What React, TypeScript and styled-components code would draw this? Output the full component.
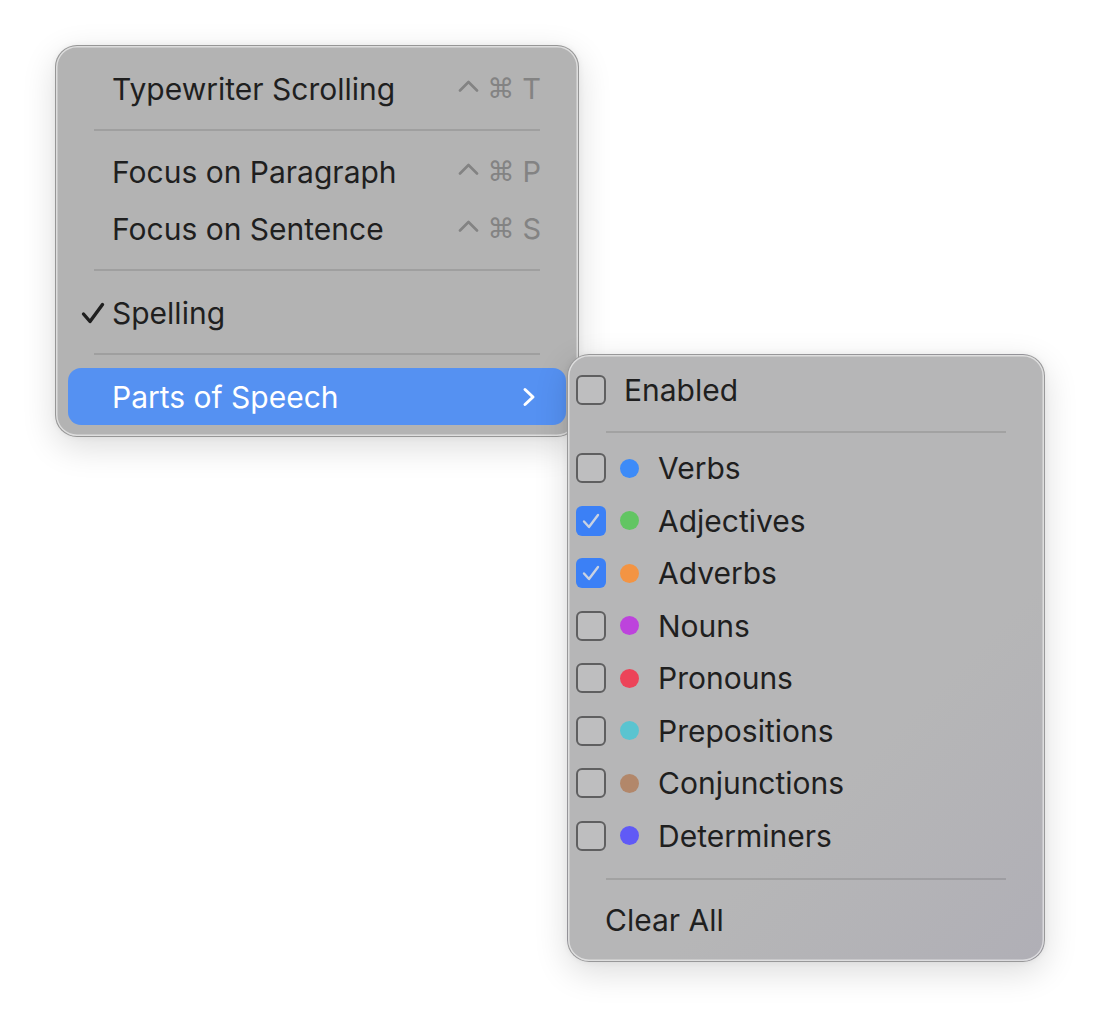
import React from 'react';
import styled, { createGlobalStyle } from 'styled-components';

const GlobalStyle = createGlobalStyle`
  html, body {
    margin: 0;
    padding: 0;
    background: #ffffff;
  }
  body {
    font-family: Inter, "Noto Sans", "Liberation Sans", sans-serif;
    -webkit-font-smoothing: antialiased;
  }
`;

const Desktop = styled.div`
  position: relative;
  width: 1100px;
  height: 1026px;
  overflow: hidden;
`;

const Panel = styled.div<{ $left: number; $top: number; $width: number }>`
  position: absolute;
  left: ${p => p.$left}px;
  top: ${p => p.$top}px;
  width: ${p => p.$width}px;
  box-sizing: border-box;
  border-radius: 22px;
  border: 1px solid rgba(0, 0, 0, 0.16);
  box-shadow: inset 0 0 0 1.5px rgba(255, 255, 255, 0.55), 0 10px 34px rgba(0, 0, 0, 0.14),
    0 0 6px rgba(0, 0, 0, 0.06);
  display: flex;
  flex-direction: column;
`;

const MainPanel = styled(Panel)`
  background: #b3b3b3;
  padding: 14px 0 11px;
`;

const SubPanel = styled(Panel)`
  background: linear-gradient(135deg, #b6b6b7 65%, #b0afb6 100%);
  padding: 9px 0 14px;
`;

const MenuItem = styled.div<{ $active?: boolean }>`
  height: 57px;
  margin: 0 12px;
  padding: 0 25px 0 44px;
  display: flex;
  align-items: center;
  border-radius: 13px;
  position: relative;
  font-size: 30px;
  color: ${p => (p.$active ? '#ffffff' : '#1f1f1f')};
  background: ${p => (p.$active ? '#5591f2' : 'transparent')};
`;

const Label = styled.span`
  flex: 1;
`;

const Tick = styled.svg`
  position: absolute;
  left: 13px;
  top: 18px;
`;

const Shortcut = styled.span`
  display: flex;
  gap: 8px;
  align-items: center;
  color: #838383;
  font-size: 29px;
`;

const Caret = styled.svg`
  margin-top: -6px;
`;

const Glyph = styled.span`
  font-family: "DejaVu Sans", Inter, sans-serif;
  font-size: 27px;
`;

const Separator = styled.div<{ $h: number; $line: number }>`
  height: ${p => p.$h}px;
  margin: 0 38px;
  position: relative;
  &::after {
    content: '';
    position: absolute;
    left: 0;
    right: 0;
    top: ${p => p.$line}px;
    height: 2px;
    background: rgba(0, 0, 0, 0.11);
  }
`;

const SubRow = styled.div<{ $h?: number }>`
  height: ${p => p.$h ?? 52.5}px;
  padding-left: 8px;
  display: flex;
  align-items: center;
  font-size: 30px;
  color: #1f1f1f;
`;

const Box = styled.span<{ $checked?: boolean }>`
  width: 30px;
  height: 30px;
  box-sizing: border-box;
  border-radius: 6px;
  flex-shrink: 0;
  display: flex;
  align-items: center;
  justify-content: center;
  border: ${p => (p.$checked ? 'none' : '2.5px solid #5f5f60')};
  background: ${p => (p.$checked ? '#3b80f6' : 'rgba(255,255,255,0.12)')};
`;

const Dot = styled.span<{ $color: string }>`
  width: 19px;
  height: 19px;
  border-radius: 50%;
  background: ${p => p.$color};
  margin: 0 19px 0 14px;
  flex-shrink: 0;
`;

const EnabledLabel = styled.span`
  margin-left: 18px;
`;

const ClearLabel = styled.span`
  margin-left: 29px;
`;

const parts = [
  { name: 'Verbs', color: '#3d8bf8', checked: false },
  { name: 'Adjectives', color: '#62c563', checked: true },
  { name: 'Adverbs', color: '#f39443', checked: true },
  { name: 'Nouns', color: '#bd43dc', checked: false },
  { name: 'Pronouns', color: '#ec4459', checked: false },
  { name: 'Prepositions', color: '#5ac4d0', checked: false },
  { name: 'Conjunctions', color: '#b2876a', checked: false },
  { name: 'Determiners', color: '#605af6', checked: false },
];

const Check = () => (
  <svg width={18} height={16} viewBox="0 0 18 16">
    <polyline points="2,8.5 7,14 16,2" fill="none" stroke="#c9d2e2" strokeWidth={2.4}
      strokeLinecap="round" strokeLinejoin="round" />
  </svg>
);

const Keys = ({ k }: { k: string }) => (
  <Shortcut>
    <Caret width={21} height={12} viewBox="0 0 21 12">
      <polyline points="2,10.5 10.5,2 19,10.5" fill="none" stroke="#838383" strokeWidth={2.6}
        strokeLinecap="round" strokeLinejoin="round" />
    </Caret>
    <Glyph>⌘</Glyph>
    <span>{k}</span>
  </Shortcut>
);

export default function App() {
  return (
    <Desktop>
      <GlobalStyle />
      <MainPanel $left={55} $top={45} $width={524}>
        <MenuItem>
          <Label>Typewriter Scrolling</Label>
          <Keys k="T" />
        </MenuItem>
        <Separator $h={26} $line={12} />
        <MenuItem>
          <Label>Focus on Paragraph</Label>
          <Keys k="P" />
        </MenuItem>
        <MenuItem>
          <Label>Focus on Sentence</Label>
          <Keys k="S" />
        </MenuItem>
        <Separator $h={27} $line={12} />
        <MenuItem>
          <Tick width={24} height={22} viewBox="0 0 24 22">
            <polyline points="2.5,12 9,19.5 21.5,2.5" fill="none" stroke="#1f1f1f" strokeWidth={3.4}
              strokeLinecap="round" strokeLinejoin="round" />
          </Tick>
          <Label>Spelling</Label>
        </MenuItem>
        <Separator $h={27} $line={12} />
        <MenuItem $active>
          <Label>Parts of Speech</Label>
          <svg width={16} height={20} viewBox="0 0 16 20" style={{ marginRight: 4 }}>
            <polyline points="4,2.5 12,10 4,17.5" fill="none" stroke="#ffffff" strokeWidth={3}
              strokeLinecap="round" strokeLinejoin="round" />
          </svg>
        </MenuItem>
      </MainPanel>

      <SubPanel $left={567} $top={354} $width={478}>
        <SubRow>
          <Box />
          <EnabledLabel>Enabled</EnabledLabel>
        </SubRow>
        <Separator $h={25.5} $line={14} />
        {parts.map(p => (
          <SubRow key={p.name}>
            <Box $checked={p.checked}>{p.checked && <Check />}</Box>
            <Dot $color={p.color} />
            <span>{p.name}</span>
          </SubRow>
        ))}
        <Separator $h={32} $line={16} />
        <SubRow>
          <ClearLabel>Clear All</ClearLabel>
        </SubRow>
      </SubPanel>
    </Desktop>
  );
}
